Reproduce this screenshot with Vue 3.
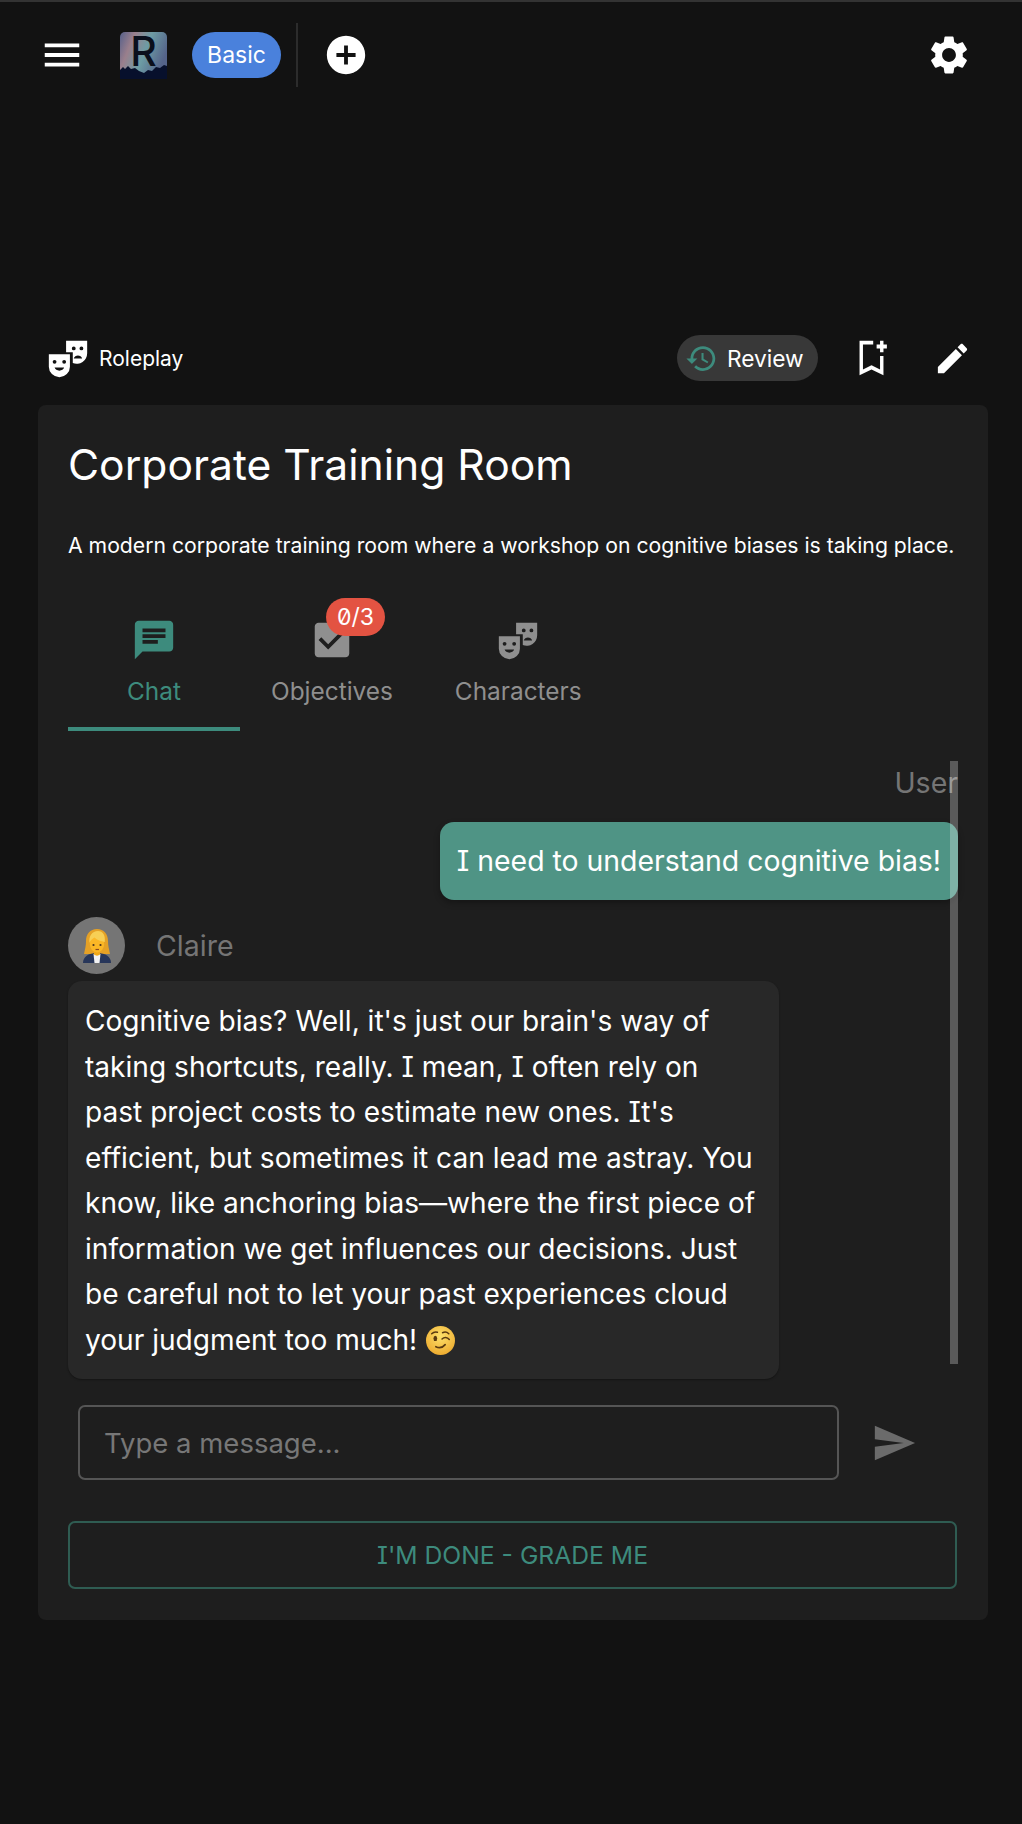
<template>
  <div class="page">
    <header class="topbar">
      <svg class="ico menu" viewBox="0 0 24 24"><path :d="icons.menu" /></svg>
      <div class="logo">
        <svg viewBox="0 0 47 47" width="47" height="47">
          <defs>
            <linearGradient id="sky" x1="0" y1="0" x2="1" y2="0.4">
              <stop offset="0" stop-color="#56608a" />
              <stop offset="0.28" stop-color="#9a7f8c" />
              <stop offset="0.6" stop-color="#6d9ca4" />
              <stop offset="1" stop-color="#55648a" />
            </linearGradient>
          </defs>
          <rect width="47" height="47" rx="5" fill="url(#sky)" />
          <path d="M0 47V38l3-3 2 2 3-3 3 3 4-1 4 3 5 2 4-3 4 1 4-4 4 1 4-3 3 1v13z" fill="#07102c" />
        </svg>
        <span class="logo-r">R</span>
      </div>
      <span class="plan">Basic</span>
      <span class="divider"></span>
      <svg class="ico plus" viewBox="0 0 24 24"><path :d="icons.add" /></svg>
      <svg class="ico gear" viewBox="0 0 24 24"><path :d="icons.settings" /></svg>
    </header>

    <div class="subbar">
      <svg class="ico masks" viewBox="0 0 24 24"><path fill-rule="evenodd" :d="icons.masks" /></svg>
      <span class="mode">Roleplay</span>
      <button class="review">
        <svg class="hist" viewBox="0 0 24 24"><path :d="icons.history" /></svg>
        Review
      </button>
      <svg class="ico bookmark" viewBox="0 0 24 24" preserveAspectRatio="none"><path :d="icons.bookmark" /></svg>
      <svg class="pencil" viewBox="0 0 24 24"><path :d="icons.edit" /></svg>
    </div>

    <main class="card">
      <h1>Corporate Training Room</h1>
      <p class="desc">A modern corporate training room where a workshop on cognitive biases is taking place.</p>

      <nav class="tabs">
        <div class="tab active">
          <svg class="tab-ico" viewBox="0 0 24 24"><path :d="icons.chat" /></svg>
          <span>Chat</span>
        </div>
        <div class="tab">
          <div class="tab-ico-wrap">
            <svg class="tab-ico" viewBox="0 0 24 24"><path :d="icons.check" /></svg>
            <span class="badge">0/3</span>
          </div>
          <span>Objectives</span>
        </div>
        <div class="tab">
          <svg class="tab-ico" viewBox="0 0 24 24"><path fill-rule="evenodd" :d="icons.masks" /></svg>
          <span>Characters</span>
        </div>
      </nav>

      <section class="messages">
        <div class="scrollbar"></div>
        <div class="who right">User</div>
        <div class="bubble user">I need to understand cognitive bias!</div>
        <div class="who-row">
          <div class="avatar">
            <svg viewBox="0 0 30 36" width="30" height="36">
              <path d="M15 1C8 1 4 6 4 13c0 5-1 8-2 13h26c-1-5-2-8-2-13C26 6 22 1 15 1z" fill="#e5a126" />
              <path d="M1 35c0-6 5-10 14-10s14 4 14 10z" fill="#27365a" />
              <path d="M11.500 26h7l-1 9h-5z" fill="#f2f2f2" />
              <path d="M12 22h6v4.500c-1.500 1.500-4.500 1.500-6 0z" fill="#f0a818" />
              <ellipse cx="15" cy="16" rx="7.200" ry="8.500" fill="#fbb726" />
              <path d="M7.500 15C6.500 8 10 3 16 3c5 0 7.500 4 6.800 11-3.800-.8-7.800-2-10.300-4.500-2 1-4.300 3-5 5.500z" fill="#f7cf55" />
              <circle cx="11.500" cy="17" r="1.100" fill="#4a3220" />
              <circle cx="18.500" cy="17" r="1.100" fill="#4a3220" />
              <path d="M13.500 21.500h3.500" stroke="#8a4a20" stroke-width="1.200" />
            </svg>
          </div>
          <span class="who">{{ name }}</span>
        </div>
        <div class="bubble ai">{{ reply }} <svg class="wink" viewBox="0 0 28 28" width="29" height="29">
            <defs>
              <radialGradient id="face" cx="0.5" cy="0.35" r="0.7">
                <stop offset="0" stop-color="#fde06a" />
                <stop offset="1" stop-color="#eca82c" />
              </radialGradient>
            </defs>
            <circle cx="14" cy="14" r="14" fill="url(#face)" />
            <ellipse cx="9" cy="12" rx="1.800" ry="2.600" fill="#5a3a10" />
            <path d="M15.500 12.500c2-2 5-2 7 .5M5.500 7.500c1.500-1.500 3.500-2 5.500-1.500M16 6.500c2-1 4.500-.5 6 1" stroke="#5a3a10" stroke-width="1.500" fill="none" stroke-linecap="round" />
            <path d="M9.500 20c3 1.500 6.500 1 9-2" stroke="#5a3a10" stroke-width="1.600" fill="none" stroke-linecap="round" />
          </svg></div>
      </section>

      <div class="composer">
        <input class="field" type="text" placeholder="Type a message..." />
        <svg class="ico send" viewBox="0 0 24 24"><path :d="icons.send" /></svg>
      </div>

      <button class="done">I'm done - grade me</button>
    </main>
  </div>
</template>

<script setup>
const name = 'Claire'
// line breaks kept as in the message, font metrics differ otherwise
const reply = [
  "Cognitive bias? Well, it's just our brain's way of",
  'taking shortcuts, really. I mean, I often rely on',
  "past project costs to estimate new ones. It's",
  'efficient, but sometimes it can lead me astray. You',
  'know, like anchoring bias—where the first piece of',
  'information we get influences our decisions. Just',
  'be careful not to let your past experiences cloud',
  'your judgment too much!'
].join('\n')

const icons = {
  menu: 'M3 18h18v-2H3v2zm0-5h18v-2H3v2zm0-7v2h18V6H3z',
  add: 'M12 2C6.48 2 2 6.48 2 12s4.48 10 10 10 10-4.48 10-10S17.52 2 12 2zm5 11h-4v4h-2v-4H7v-2h4V7h2v4h4v2z',
  settings: 'M19.14 12.94c.04-.3.06-.61.06-.94 0-.32-.02-.64-.07-.94l2.03-1.58c.18-.14.23-.41.12-.61l-1.92-3.32c-.12-.22-.37-.29-.59-.22l-2.39.96c-.5-.38-1.03-.7-1.62-.94l-.36-2.54c-.04-.24-.24-.41-.48-.41h-3.84c-.24 0-.43.17-.47.41l-.36 2.54c-.59.24-1.13.57-1.62.94l-2.39-.96c-.22-.08-.47 0-.59.22L2.74 8.87c-.12.21-.08.47.12.61l2.03 1.58c-.05.3-.09.63-.09.94s.02.64.07.94l-2.03 1.58c-.18.14-.23.41-.12.61l1.92 3.32c.12.22.37.29.59.22l2.39-.96c.5.38 1.03.7 1.62.94l.36 2.54c.05.24.24.41.48.41h3.84c.24 0 .44-.17.47-.41l.36-2.54c.59-.24 1.13-.56 1.62-.94l2.39.96c.22.08.47 0 .59-.22l1.92-3.32c.12-.22.07-.47-.12-.61l-2.01-1.58zM12 15.6c-1.98 0-3.6-1.62-3.6-3.6s1.62-3.6 3.6-3.6 3.6 1.62 3.6 3.6-1.62 3.6-3.6 3.6z',
  history: 'M13 3c-4.97 0-9 4.03-9 9H1l3.89 3.89.07.14L9 12H6c0-3.87 3.13-7 7-7s7 3.13 7 7-3.13 7-7 7c-1.93 0-3.68-.79-4.94-2.06l-1.42 1.42C8.27 19.99 10.51 21 13 21c4.97 0 9-4.03 9-9s-4.03-9-9-9zm-1 5v5l4.28 2.54.72-1.21-3.5-2.08V8H12z',
  bookmark: 'M17 11v6.97l-5-2.14-5 2.14V5h6V3H5v18l7-3 7 3V11h-2zm4-4h-2v2h-2V7h-2V5h2V3h2v2h2v2z',
  edit: 'M3 17.25V21h3.75L17.81 9.94l-3.75-3.75L3 17.25zM20.71 7.04c.39-.39.39-1.02 0-1.41l-2.34-2.34c-.39-.39-1.02-.39-1.41 0l-1.83 1.83 3.75 3.75 1.83-1.83z',
  chat: 'M20 2H4c-1.1 0-1.99.9-1.99 2L2 22l4-4h14c1.1 0 2-.9 2-2V4c0-1.1-.9-2-2-2zM6 9h12v2H6V9zm8 5H6v-2h8v2zm4-6H6V6h12v2z',
  check: 'M19 3H5c-1.11 0-2 .9-2 2v14c0 1.1.89 2 2 2h14c1.11 0 2-.9 2-2V5c0-1.1-.89-2-2-2zm-9 14l-5-5 1.41-1.41L10 14.17l7.59-7.59L19 8l-9 9z',
  send: 'M2.01 21L23 12 2.01 3 2 10l15 2-15 2z',
  masks: 'M2 10h11v6.500a5.500 5.500 0 0 1-11 0zM5 13a1 1 0 1 0 0 2 1 1 0 0 0 0-2zM10 13a1 1 0 1 0 0 2 1 1 0 0 0 0-2zM5 17c.3 1 1.300 1.600 2.500 1.600s2.200-.6 2.500-1.600z M11 3h11v6.500a5.500 5.500 0 0 1-7.500 5.130V9H11zM15 6a1 1 0 1 0 0 2 1 1 0 0 0 0-2zM19 6a1 1 0 1 0 0 2 1 1 0 0 0 0-2zM15 12.300h4.400c-.3-1-1.200-1.600-2.200-1.600s-1.900.6-2.200 1.600z'
}
</script>

<style>
html, body {
  margin: 0;
  background: #121212;
}
</style>

<style scoped>
.page {
  width: 1022px;
  min-height: 1824px;
  background: #121212;
  color: #fff;
  font-family: Inter, "Liberation Sans", sans-serif;
  font-feature-settings: "cv08", "zero";
  box-sizing: border-box;
  border-top: 2px solid #333;
}

.ico {
  width: 46px;
  height: 46px;
  fill: #fff;
  flex: none;
}

.topbar {
  display: flex;
  align-items: center;
  height: 64px;
  margin-top: 21px;
  padding-left: 39px;
}

.logo {
  position: relative;
  width: 47px;
  height: 47px;
  margin-left: 35px;
}

.logo svg {
  display: block;
}

.logo-r {
  position: absolute;
  left: 0;
  right: 0;
  top: -4px;
  text-align: center;
  line-height: 47px;
  font-size: 41px;
  font-weight: 500;
  color: #0a0f1c;
}

.plan {
  width: 89px;
  height: 46px;
  line-height: 46px;
  margin-left: 25px;
  text-align: center;
  background: #4a81dc;
  border-radius: 23px;
  font-size: 23px;
}

.divider {
  width: 2px;
  height: 64px;
  background: #2c2c2c;
  margin-left: 15px;
}

.plus {
  margin-left: 25px;
}

.gear {
  margin-left: auto;
  margin-right: 50px;
}

.subbar {
  display: flex;
  align-items: center;
  height: 46px;
  margin-top: 248px;
  padding-left: 45px;
}

.mode {
  margin-left: 8px;
  font-size: 21px;
}

.review {
  display: flex;
  align-items: center;
  width: 141px;
  height: 46px;
  margin-left: auto;
  padding: 0 0 0 8px;
  gap: 9px;
  background: #383838;
  border: none;
  border-radius: 23px;
  color: #fff;
  font: inherit;
  font-feature-settings: inherit;
  font-size: 22.700px;
  box-sizing: border-box;
}

.hist {
  width: 33px;
  height: 33px;
  fill: #3d8b7d;
}

.bookmark {
  width: 41px;
  margin-left: 33px;
}

.pencil {
  width: 39px;
  height: 39px;
  fill: #fff;
  margin-left: 41px;
  margin-right: 50px;
}

.card {
  margin: 24px 34px 0 38px;
  padding: 30px;
  height: 1215px;
  box-sizing: border-box;
  background: #1e1e1e;
  border-radius: 8px;
}

h1 {
  margin: 0;
  height: 60px;
  line-height: 60px;
  font-size: 42.600px;
  font-weight: 400;
}

.desc {
  margin: 35px 0 0;
  line-height: 30px;
  font-size: 21.200px;
  white-space: nowrap;
}

.tabs {
  display: flex;
  margin-top: 57px;
}

.tab {
  display: flex;
  flex-direction: column;
  align-items: center;
  min-width: 172px;
  padding: 0 31px 21px;
  box-sizing: border-box;
  border-bottom: 4px solid transparent;
  color: #8f8f8f;
  font-size: 24.400px;
  line-height: 30px;
}

.tab.active {
  color: #3d8b7d;
  border-bottom-color: #3d8b7d;
}

.tab-ico {
  display: block;
  width: 46px;
  height: 46px;
  fill: currentColor;
  margin-bottom: 13px;
}

.tab-ico-wrap {
  position: relative;
}

.badge {
  position: absolute;
  left: 17px;
  top: -19px;
  width: 59px;
  height: 38px;
  line-height: 38px;
  border-radius: 19px;
  text-align: center;
  background: #e35342;
  color: #fff;
  font-size: 23px;
}

.messages {
  position: relative;
  height: 603px;
  margin-top: 30px;
}

.scrollbar {
  position: absolute;
  right: 0;
  top: 0;
  width: 8px;
  height: 100%;
  background: rgba(255, 255, 255, 0.27);
  z-index: 1;
}

.who {
  color: #757575;
  font-size: 28.500px;
  line-height: 44px;
}

.who.right {
  text-align: right;
}

.bubble {
  box-sizing: border-box;
  border-radius: 14px;
  font-size: 28.100px;
}

.bubble.user {
  width: fit-content;
  margin: 17px 0 0 auto;
  padding: 0 17px;
  height: 78px;
  line-height: 78px;
  font-size: 28.400px;
  background: #4f9485;
  box-shadow: 0 3px 6px rgba(0, 0, 0, 0.3);
}

.who-row {
  display: flex;
  align-items: center;
  gap: 31px;
  margin-top: 17px;
}

.avatar {
  display: flex;
  align-items: center;
  justify-content: center;
  width: 57px;
  height: 57px;
  border-radius: 50%;
  background: #757575;
}

.bubble.ai {
  width: 711px;
  margin-top: 7px;
  padding: 18px 17px 16px;
  line-height: 45.500px;
  white-space: pre-line;
  background: #282828;
  box-shadow: 0 1px 2px rgba(0, 0, 0, 0.35);
}

.wink {
  vertical-align: -5px;
  margin-left: 1px;
}

.composer {
  display: flex;
  align-items: center;
  margin: 41px 0 0 10px;
}

.field {
  width: 761px;
  height: 75px;
  padding: 0 24px;
  box-sizing: border-box;
  background: transparent;
  border: 2px solid #555;
  border-radius: 7px;
  color: #fff;
  font: inherit;
  font-feature-settings: inherit;
  font-size: 27.500px;
  outline: none;
}

.field::placeholder {
  color: #777;
  opacity: 1;
}

.send {
  margin-left: 32px;
  fill: #6b6b6b;
}

.done {
  display: block;
  width: 889px;
  height: 68px;
  margin-top: 41px;
  background: transparent;
  border: 2px solid #2f5c52;
  border-radius: 7px;
  color: #3d8b7d;
  font: inherit;
  font-size: 24.700px;
  text-transform: uppercase;
}
</style>
